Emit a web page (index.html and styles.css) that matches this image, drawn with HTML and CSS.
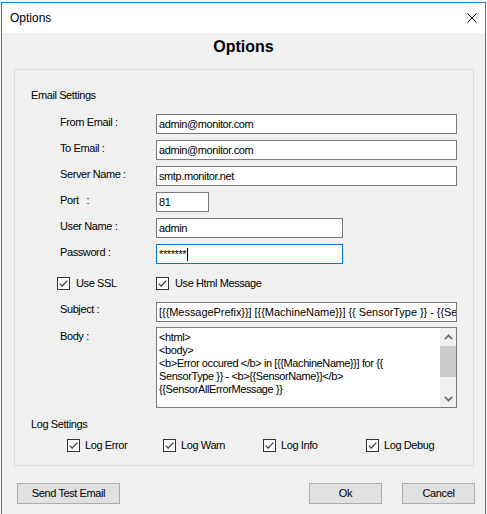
FILE: index.html
```html
<!DOCTYPE html>
<html>
<head>
<meta charset="utf-8">
<title>Options</title>
<link rel="stylesheet" href="styles.css">
</head>
<body>
<div class="window">
  <div class="titlebar">
    <span class="title">Options</span>
    <svg class="close" width="10" height="10" viewBox="0 0 10 10"><path d="M0.5 0.5L9.5 9.5M9.5 0.5L0.5 9.5" stroke="#000" stroke-width="1" fill="none"/></svg>
  </div>
  <div class="client">
    <h1 class="heading">Options</h1>
    <div class="group">
      <div class="section-title">Email Settings</div>
      <div class="form">
        <div class="lbl">From Email :</div><div class="tb w-full">admin@monitor.com</div>
        <div class="lbl">To Email :</div><div class="tb w-full">admin@monitor.com</div>
        <div class="lbl">Server Name :</div><div class="tb w-full">smtp.monitor.net</div>
        <div class="lbl">Port&nbsp;&nbsp;&nbsp;:</div><div class="tb w-port">81</div>
        <div class="lbl">User Name :</div><div class="tb w-mid">admin</div>
        <div class="lbl">Password :</div><div class="tb w-mid focused">*******<span class="caret"></span></div>
        <div class="chk chk-ssl">
          <svg class="box" width="13" height="13" viewBox="0 0 13 13"><rect x="0.5" y="0.5" width="12" height="12" fill="#fff" stroke="#333"/><path d="M2.8 6.6L5.2 9.1L10.3 3.6" stroke="#333" stroke-width="1.2" fill="none"/></svg>
          <span>Use SSL</span>
        </div>
        <div class="chk">
          <svg class="box" width="13" height="13" viewBox="0 0 13 13"><rect x="0.5" y="0.5" width="12" height="12" fill="#fff" stroke="#333"/><path d="M2.8 6.6L5.2 9.1L10.3 3.6" stroke="#333" stroke-width="1.2" fill="none"/></svg>
          <span>Use Html Message</span>
        </div>
        <div class="lbl lbl-subject">Subject :</div><div class="tb w-full subject">[{{MessagePrefix}}] [{{MachineName}}] {{ SensorType }} - {{SensorName}}</div>
        <div class="lbl lbl-body">Body :</div>
        <div class="textarea">
          <div class="ta-text">
            <div>&lt;html&gt;</div>
            <div>&lt;body&gt;</div>
            <div>&lt;b&gt;Error occured &lt;/b&gt; in [{{MachineName}}] for {{</div>
            <div>SensorType }} - &lt;b&gt;{{SensorName}}&lt;/b&gt;</div>
            <div>{{SensorAllErrorMessage }}</div>
          </div>
          <div class="scrollbar">
            <div class="sb-btn"><svg width="9" height="6" viewBox="0 0 9 6"><path d="M0.8 5.2L4.5 1.5L8.2 5.2" stroke="#606060" stroke-width="1.6" fill="none"/></svg></div>
            <div class="sb-thumb"></div>
            <div class="sb-track"></div>
            <div class="sb-btn"><svg width="9" height="6" viewBox="0 0 9 6"><path d="M0.8 0.8L4.5 4.5L8.2 0.8" stroke="#606060" stroke-width="1.6" fill="none"/></svg></div>
          </div>
        </div>
      </div>
      <div class="section-title log-title">Log Settings</div>
      <div class="logrow">
        <div class="chk">
          <svg class="box" width="13" height="13" viewBox="0 0 13 13"><rect x="0.5" y="0.5" width="12" height="12" fill="#fff" stroke="#333"/><path d="M2.8 6.6L5.2 9.1L10.3 3.6" stroke="#333" stroke-width="1.2" fill="none"/></svg>
          <span>Log Error</span>
        </div>
        <div class="chk">
          <svg class="box" width="13" height="13" viewBox="0 0 13 13"><rect x="0.5" y="0.5" width="12" height="12" fill="#fff" stroke="#333"/><path d="M2.8 6.6L5.2 9.1L10.3 3.6" stroke="#333" stroke-width="1.2" fill="none"/></svg>
          <span>Log Warn</span>
        </div>
        <div class="chk">
          <svg class="box" width="13" height="13" viewBox="0 0 13 13"><rect x="0.5" y="0.5" width="12" height="12" fill="#fff" stroke="#333"/><path d="M2.8 6.6L5.2 9.1L10.3 3.6" stroke="#333" stroke-width="1.2" fill="none"/></svg>
          <span>Log Info</span>
        </div>
        <div class="chk">
          <svg class="box" width="13" height="13" viewBox="0 0 13 13"><rect x="0.5" y="0.5" width="12" height="12" fill="#fff" stroke="#333"/><path d="M2.8 6.6L5.2 9.1L10.3 3.6" stroke="#333" stroke-width="1.2" fill="none"/></svg>
          <span>Log Debug</span>
        </div>
      </div>
    </div>
    <div class="buttons">
      <div class="btn btn-send">Send Test Email</div>
      <div class="spacer"></div>
      <div class="btn btn-ok">Ok</div>
      <div class="btn btn-cancel">Cancel</div>
    </div>
  </div>
</div>
</body>
</html>
```

FILE: styles.css
```css
html, body {
  margin: 0;
  padding: 0;
}
body {
  background: #f7f7f7;
  font-family: "Liberation Sans", Arial, sans-serif;
  font-size: 11px;
  line-height: 13px;
  color: #000;
  overflow: hidden;
}
.window {
  box-sizing: border-box;
  width: 485px;
  height: 530px;
  margin: 2px 0 0 1px;
  border: 1px solid #1883d7;
  background: #f0f0f0;
  display: flex;
  flex-direction: column;
}
.titlebar {
  height: 30px;
  flex: none;
  background: #fff;
  display: flex;
  align-items: center;
  padding-left: 8px;
}
.title {
  font-size: 12px;
  line-height: 14px;
  flex: 1;
}
.close {
  display: block;
  margin-right: 8px;
}
.client {
  padding-top: 4px;
  letter-spacing: -0.4px;
}
.heading {
  margin: 0;
  font-size: 16px;
  line-height: 20px;
  font-weight: bold;
  text-align: center;
  letter-spacing: 0;
}
.group {
  box-sizing: border-box;
  width: 460px;
  height: 397px;
  margin: 12px 0 0 12px;
  border: 1px solid #dcdcdc;
  padding: 19px 0 0 16px;
}
.section-title {
  line-height: 13px;
}
.form {
  display: grid;
  grid-template-columns: 96px 301px;
  row-gap: 6px;
  margin: 12px 0 0 29px;
  align-items: start;
}
.lbl {
  padding-top: 2px;
  white-space: nowrap;
}
.lbl-subject {
  padding-top: 1px;
}
.tb {
  box-sizing: border-box;
  height: 20px;
  border: 1px solid #7a7a7a;
  background: #fff;
  padding: 3px 2px 0;
  white-space: nowrap;
  overflow: hidden;
}
.subject {
  letter-spacing: -0.05px;
}
.w-full { width: 301px; }
.w-port { width: 53px; }
.w-mid { width: 187px; }
.focused {
  border-color: #0078d7;
  display: flex;
  align-items: flex-start;
}
.caret {
  display: inline-block;
  width: 1px;
  height: 13px;
  background: #000;
  margin-left: 1px;
}
.chk {
  display: flex;
  align-items: center;
  gap: 6px;
  height: 13px;
  white-space: nowrap;
  margin: 7px 0 6px;
}
.chk .box {
  display: block;
  flex: none;
}
.chk-ssl {
  margin-left: -3px;
}
.textarea {
  box-sizing: border-box;
  width: 301px;
  height: 81px;
  margin-top: -1px;
  border: 1px solid #7a7a7a;
  background: #fff;
  display: flex;
}
.ta-text {
  flex: 1;
  padding: 3px 0 0 2px;
  white-space: nowrap;
  overflow: hidden;
}
.scrollbar {
  width: 16px;
  flex: none;
  background: #f0f0f0;
  display: flex;
  flex-direction: column;
}
.sb-btn {
  height: 17px;
  display: flex;
  align-items: center;
  justify-content: center;
}
.sb-btn svg {
  display: block;
}
.sb-thumb {
  height: 31px;
  margin-top: 1px;
  background: #cdcdcd;
}
.sb-track {
  flex: 1;
}
.log-title {
  margin-top: 10px;
}
.logrow {
  display: grid;
  grid-template-columns: 96px 100px 103px auto;
  margin: 8px 0 0 36px;
}
.logrow .chk {
  margin: 0;
  gap: 5px;
}
.buttons {
  display: flex;
  margin: 17px 10px 0 15px;
  gap: 20px;
}
.spacer {
  flex: 1;
}
.btn {
  box-sizing: border-box;
  height: 21px;
  border: 1px solid #adadad;
  background: #e1e1e1;
  display: flex;
  align-items: center;
  justify-content: center;
  white-space: nowrap;
}
.btn-send { width: 103px; }
.btn-ok { width: 73px; }
.btn-cancel { width: 73px; }
```
